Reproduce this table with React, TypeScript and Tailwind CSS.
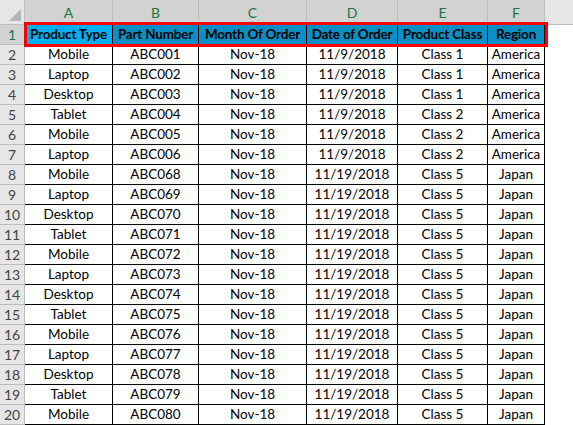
import React from "react";

const cols = [
  { letter: "A", w: 88 },
  { letter: "B", w: 86 },
  { letter: "C", w: 108 },
  { letter: "D", w: 91 },
  { letter: "E", w: 90 },
  { letter: "F", w: 57 },
];

const headers = ["Product Type", "Part Number", "Month Of Order", "Date of Order", "Product Class", "Region"];

const types = ["Mobile", "Laptop", "Desktop", "Tablet"];
const firstTypes = ["Mobile", "Laptop", "Desktop", "Tablet", "Mobile", "Laptop"];
const firstClass = ["Class 1", "Class 1", "Class 1", "Class 2", "Class 2", "Class 2"];

const rows: string[][] = [];
for (let i = 0; i < 19; i++) {
  const early = i < 6;
  const type = early ? firstTypes[i] : types[(i - 6) % 4];
  const part = early ? `ABC00${i + 1}` : `ABC0${68 + (i - 6)}`;
  rows.push([
    type,
    part,
    "Nov-18",
    early ? "11/9/2018" : "11/19/2018",
    early ? firstClass[i] : "Class 5",
    early ? "America" : "Japan",
  ]);
}

export default function App() {
  return (
    <div
      className="relative w-[573px] h-[425px] overflow-hidden bg-white text-[13.5px] text-black"
      style={{ fontFamily: "Lato, 'Noto Sans', sans-serif" }}
    >
      {/* column header strip */}
      <div className="flex h-[25px] bg-[#e6e6e6] border-b border-[#bdbdbd]">
        <div className="relative w-[25px] shrink-0 border-r border-[#bdbdbd]">
          <div className="absolute right-[3px] bottom-[3px] w-0 h-0 border-l-[12px] border-l-transparent border-b-[12px] border-b-[#b4b4b4]" />
        </div>
        {cols.map((c) => (
          <div
            key={c.letter}
            style={{ width: c.w }}
            className="shrink-0 flex items-center justify-center bg-[#d2d2d2] border-r border-[#bdbdbd] text-[#217346] text-[14px]"
          >
            {c.letter}
          </div>
        ))}
        <div className="flex-1" />
      </div>

      {/* header row 1 */}
      <div className="flex h-[20px]">
        <div className="w-[25px] shrink-0 flex items-center justify-center bg-[#d2d2d2] border-r border-b border-[#bdbdbd] text-[#217346] text-[14px]">
          1
        </div>
        {headers.map((h, i) => (
          <div
            key={h}
            style={{ width: cols[i].w }}
            className={`shrink-0 flex items-center justify-center font-bold tracking-[-0.2px] border-r border-b border-black whitespace-nowrap ${
              i === 0 ? "bg-[#00b0f0]" : "bg-[#0b8fc4]"
            }`}
          >
            {h}
          </div>
        ))}
      </div>

      {/* data rows */}
      {rows.map((r, ri) => (
        <div key={ri} className="flex h-[20px]">
          <div className="w-[25px] shrink-0 flex items-center justify-center bg-[#e6e6e6] border-r border-b border-[#bdbdbd] text-[#444] text-[14px]">
            {ri + 2}
          </div>
          {r.map((v, ci) => (
            <div
              key={ci}
              style={{ width: cols[ci].w }}
              className="shrink-0 flex items-center justify-center border-r border-b border-black whitespace-nowrap"
            >
              {v}
            </div>
          ))}
        </div>
      ))}

      {/* selection outline */}
      <div className="absolute left-[24px] top-[22px] w-[524px] h-[25px] border-[3px] border-[#ff0000] pointer-events-none" />
    </div>
  );
}
